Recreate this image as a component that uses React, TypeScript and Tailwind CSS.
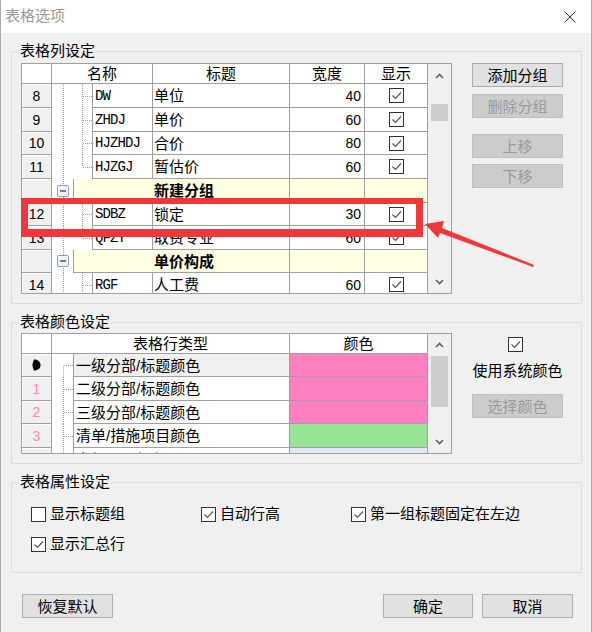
import React from "react";

const SANS = "font-['Liberation_Sans','Noto_Sans_CJK_SC',sans-serif]";
const MONO = "font-['Liberation_Mono','Noto_Sans_CJK_SC',monospace]";
const LINE = "border-[#a0a0a0]";

type Item = { kind: "item"; no: string; code: string; title: string; width: string; hc: string; h: number; last?: boolean };
type Group = { kind: "group"; title: string; hc: string; h: number };

const columnRows: (Item | Group)[] = [
  { kind: "item", no: "8", code: "DW", title: "单位", width: "40", hc: "h-[24px]", h: 24 },
  { kind: "item", no: "9", code: "ZHDJ", title: "单价", width: "60", hc: "h-[24px]", h: 24 },
  { kind: "item", no: "10", code: "HJZHDJ", title: "合价", width: "80", hc: "h-[23px]", h: 23 },
  { kind: "item", no: "11", code: "HJZGJ", title: "暂估价", width: "60", hc: "h-[24px]", h: 24, last: true },
  { kind: "group", title: "新建分组", hc: "h-[24px]", h: 24 },
  { kind: "item", no: "12", code: "SDBZ", title: "锁定", width: "30", hc: "h-[23px]", h: 23 },
  { kind: "item", no: "13", code: "QFZY", title: "取费专业", width: "60", hc: "h-[24px]", h: 24, last: true },
  { kind: "group", title: "单价构成", hc: "h-[23px]", h: 23 },
  { kind: "item", no: "14", code: "RGF", title: "人工费", width: "60", hc: "h-[24px]", h: 24 },
];

const colorRows = [
  { no: "", sel: true, text: "一级分部/标题颜色", color: "bg-[#ff80c0]", hc: "h-[23px]", h: 23 },
  { no: "1", sel: false, text: "二级分部/标题颜色", color: "bg-[#ff80c0]", hc: "h-[24px]", h: 24 },
  { no: "2", sel: false, text: "三级分部/标题颜色", color: "bg-[#ff80c0]", hc: "h-[23px]", h: 23 },
  { no: "3", sel: false, text: "清单/措施项目颜色", color: "bg-[#97e594]", hc: "h-[24px]", h: 24 },
  { no: "4", sel: false, text: "定额子目颜色", color: "bg-[#e4e4fa]", hc: "h-[24px]", h: 24 },
];

function Check({ on = true, className = "" }: { on?: boolean; className?: string }) {
  return (
    <span className={`flex h-[15px] w-[15px] shrink-0 items-center justify-center border border-[#333333] bg-white ${className}`}>
      {on && (
        <svg width="13" height="13" viewBox="0 0 13 13">
          <path d="M2.5 6.5 L5.5 9.5 L11 3.5" fill="none" stroke="#555555" strokeWidth="1.2" />
        </svg>
      )}
    </span>
  );
}

function Chevron({ up = false }: { up?: boolean }) {
  return (
    <svg width="9" height="6" viewBox="0 0 9 6">
      <path d={up ? "M1 5 L4.5 1.5 L8 5" : "M1 1 L4.5 4.5 L8 1"} fill="none" stroke="#606060" strokeWidth="1.6" />
    </svg>
  );
}

function Btn({ children, disabled = false, className = "" }: { children: React.ReactNode; disabled?: boolean; className?: string }) {
  return (
    <button
      type="button"
      className={`flex h-[24px] items-center justify-center border leading-none ${
        disabled ? "border-[#bfbfbf] bg-[#cccccc] text-[#9a9a9a]" : "border-[#adadad] bg-[#e1e1e1] text-black"
      } ${className}`}
    >
      {children}
    </button>
  );
}

function TreeItem({ h, last }: { h: number; last?: boolean }) {
  const m = Math.floor(h / 2) + 0.5;
  return (
    <svg width="40" height={h} className="block">
      <line x1="11.5" y1="0" x2="11.5" y2={h} stroke="#a0a0a0" strokeDasharray="1 1" />
      <line x1="30.5" y1="0" x2="30.5" y2={last ? m : h} stroke="#a0a0a0" strokeDasharray="1 1" />
      <line x1="31" y1={m} x2="40" y2={m} stroke="#a0a0a0" strokeDasharray="1 1" />
    </svg>
  );
}

function TreeGroup({ h }: { h: number }) {
  const m = Math.floor(h / 2);
  return (
    <svg width="21" height={h} className="block">
      <line x1="11.5" y1="0" x2="11.5" y2={h} stroke="#a0a0a0" strokeDasharray="1 1" />
      <rect x="5.5" y={m - 5.5} width="11" height="11" rx="1" fill="#eef1f5" stroke="#8c9cb2" />
      <line x1="8" y1={m} x2="14" y2={m} stroke="#44587c" strokeWidth="1.5" />
    </svg>
  );
}

function TreeColor({ h, first }: { h: number; first?: boolean }) {
  const m = Math.floor(h / 2) + 0.5;
  return (
    <svg width="21" height={h} className="block">
      <line x1="11.5" y1={first ? m : 0} x2="11.5" y2={h} stroke="#a0a0a0" strokeDasharray="1 1" />
      <line x1="12" y1={m} x2="21" y2={m} stroke="#a0a0a0" strokeDasharray="1 1" />
    </svg>
  );
}

function ColumnTable() {
  return (
    <div className={`flex h-[231px] w-[431px] shrink-0 border ${LINE} bg-white`}>
      <div className="flex w-[406px] flex-col overflow-hidden leading-none">
        {/* header */}
        <div className={`flex h-[20px] shrink-0 border-b ${LINE}`}>
          <div className={`w-[30px] border-r ${LINE}`} />
          <div className={`flex w-[101px] items-center justify-center border-r ${LINE}`}>名称</div>
          <div className={`flex w-[137px] items-center justify-center border-r ${LINE}`}>标题</div>
          <div className={`flex w-[75px] items-center justify-center border-r ${LINE}`}>宽度</div>
          <div className={`flex w-[63px] items-center justify-center border-r ${LINE}`}>显示</div>
        </div>
        {columnRows.map((r, i) =>
          r.kind === "item" ? (
            <div key={i} className={`flex shrink-0 ${r.hc}`}>
              <div className={`flex w-[30px] items-center justify-center border-r border-b ${LINE} bg-[#f0f0f0] text-[14px] shadow-[inset_1px_1px_0_#ffffff]`}>
                {r.no}
              </div>
              <div className="w-[40px]">
                <TreeItem h={r.h} last={r.last} />
              </div>
              <div className={`flex w-[61px] items-center border-x border-b ${LINE} pl-[2px] text-[14px] tracking-[-0.9px] ${MONO}`}>
                {r.code}
              </div>
              <div className={`flex w-[137px] items-center border-r border-b ${LINE} pl-[1px]`}>{r.title}</div>
              <div className={`flex w-[75px] items-center justify-end border-r border-b ${LINE} pr-[3px] text-[14px]`}>{r.width}</div>
              <div className={`flex w-[63px] items-center justify-center border-r border-b ${LINE}`}>
                <Check />
              </div>
            </div>
          ) : (
            <div key={i} className={`flex shrink-0 ${r.hc}`}>
              <div className={`w-[30px] border-r border-b ${LINE} bg-[#f0f0f0] shadow-[inset_1px_1px_0_#ffffff]`} />
              <div className="w-[21px]">
                <TreeGroup h={r.h} />
              </div>
              <div className={`flex w-[355px] border-l border-b ${LINE} bg-[#ffffe1]`}>
                <div className="w-[79px]" />
                <div className={`flex w-[137px] items-center border-r ${LINE} pl-[1px] font-bold`}>{r.title}</div>
                <div className={`w-[75px] border-r ${LINE}`} />
                <div className={`w-[63px] border-r ${LINE}`} />
              </div>
            </div>
          )
        )}
      </div>
      <div className="flex w-[23px] flex-col bg-[#f0f0f0]">
        <div className="flex h-[23px] items-center justify-center">
          <Chevron up />
        </div>
        <div className="mx-[3px] mt-[17px] h-[17px] bg-[#cdcdcd]" />
        <div className="flex-1" />
        <div className="flex h-[23px] items-center justify-center">
          <Chevron />
        </div>
      </div>
    </div>
  );
}

function ColorTable() {
  return (
    <div className={`flex h-[121px] w-[431px] shrink-0 border ${LINE} bg-white`}>
      <div className="flex w-[406px] flex-col overflow-hidden leading-none">
        <div className={`flex h-[20px] shrink-0 border-b ${LINE}`}>
          <div className={`w-[30px] border-r ${LINE}`} />
          <div className={`flex w-[238px] items-center justify-center border-r ${LINE}`}>表格行类型</div>
          <div className={`flex w-[138px] items-center justify-center border-r ${LINE}`}>颜色</div>
        </div>
        {colorRows.map((r, i) => (
          <div key={i} className={`flex shrink-0 ${r.hc}`}>
            <div className={`flex w-[30px] items-center justify-center border-r border-b ${LINE} bg-[#f0f0f0] text-[14px] text-[#ff80c0] shadow-[inset_1px_1px_0_#ffffff]`}>
              {r.sel ? (
                <svg width="9" height="12" viewBox="0 0 9 12">
                  <path d="M2 0.5 C6.5 0.5 8.5 3 8.5 6 C8.5 9 6.5 11.5 2 11.5 C1 9 0.5 7.5 0.5 6 C0.5 4.5 1 3 2 0.5 Z" fill="#000000" />
                </svg>
              ) : (
                r.no
              )}
            </div>
            <div className="w-[21px]">
              <TreeColor h={r.h} first={i === 0} />
            </div>
            <div className={`flex w-[217px] items-center border-x border-b ${LINE} pl-[2px] ${r.sel ? "bg-[#f0f0f0]" : "bg-white"}`}>
              {r.text}
            </div>
            <div className={`w-[138px] border-r border-b ${LINE} ${r.color}`} />
          </div>
        ))}
      </div>
      <div className="flex w-[23px] flex-col bg-[#f0f0f0]">
        <div className="flex h-[22px] items-center justify-center">
          <Chevron up />
        </div>
        <div className="mx-[3px] h-[51px] bg-[#cdcdcd]" />
        <div className="flex-1" />
        <div className="flex h-[22px] items-center justify-center">
          <Chevron />
        </div>
      </div>
    </div>
  );
}

export default function App() {
  return (
    <div className={`relative flex h-[632px] w-[592px] flex-col overflow-hidden border-x border-[#aaaaaa] bg-[#f0f0f0] text-[15px] text-black ${SANS}`}>
      {/* Title bar */}
      <div className="flex h-[33px] shrink-0 items-center justify-between bg-white pl-[4px] pr-[15px]">
        <span className="text-[#999999]">表格选项</span>
        <svg width="12" height="12" viewBox="0 0 12 12">
          <path d="M0.5 0.5 L11.5 11.5 M11.5 0.5 L0.5 11.5" stroke="#333333" strokeWidth="1" />
        </svg>
      </div>

      <div className="flex flex-col pl-[10px] pr-[9px] pt-[8px]">
        {/* 表格列设定 */}
        <fieldset className="border border-[#dcdcdc] pb-[9px] pl-[9px] pt-[2px]">
          <legend className="ml-[-2px] px-[1px] leading-[20px]">表格列设定</legend>
          <div className="flex items-start">
            <ColumnTable />
            <div className="ml-[20px] flex w-[91px] flex-col">
              <Btn>添加分组</Btn>
              <Btn disabled className="mt-[7px]">删除分组</Btn>
              <Btn disabled className="mt-[16px]">上移</Btn>
              <Btn disabled className="mt-[6px]">下移</Btn>
            </div>
          </div>
        </fieldset>

        {/* 表格颜色设定 */}
        <fieldset className="mt-[8px] border border-[#dcdcdc] pb-[9px] pl-[9px] pt-[1px]">
          <legend className="ml-[-2px] px-[1px] leading-[20px]">表格颜色设定</legend>
          <div className="flex items-start">
            <ColorTable />
            <div className="ml-[20px] flex w-[91px] flex-col items-center pt-[4px]">
              <Check className="mr-[5px]" />
              <span className="mt-[9px] leading-[20px]">使用系统颜色</span>
              <Btn disabled className="mt-[13px] w-[91px]">选择颜色</Btn>
            </div>
          </div>
        </fieldset>

        {/* 表格属性设定 */}
        <fieldset className="mt-[8px] border border-[#dcdcdc] pb-[18px] pl-[9px] pt-[12px]">
          <legend className="ml-[-2px] px-[1px] leading-[20px]">表格属性设定</legend>
          <div className="grid grid-cols-[170px_150px_1fr] gap-y-[10px] pl-[10px]">
            <label className="flex h-[20px] items-center gap-[4px]">
              <Check on={false} />
              <span>显示标题组</span>
            </label>
            <label className="flex h-[20px] items-center gap-[4px]">
              <Check />
              <span>自动行高</span>
            </label>
            <label className="flex h-[20px] items-center gap-[4px]">
              <Check />
              <span>第一组标题固定在左边</span>
            </label>
            <label className="flex h-[20px] items-center gap-[4px]">
              <Check />
              <span>显示汇总行</span>
            </label>
          </div>
        </fieldset>

        {/* Footer buttons */}
        <div className="mt-[21px] flex items-center">
          <Btn className="ml-[11px] w-[91px]">恢复默认</Btn>
          <div className="flex-1" />
          <Btn className="w-[90px]">确定</Btn>
          <Btn className="ml-[9px] mr-[9px] w-[91px]">取消</Btn>
        </div>
      </div>

      {/* annotation: red highlight and arrow */}
      <div className="pointer-events-none absolute left-[20px] top-[198px] h-[39px] w-[402px] border-[7px] border-t-[6px] border-b-[8px] border-[#f0383a]" />
      <svg className="pointer-events-none absolute left-0 top-0" width="592" height="632" viewBox="0 0 592 632">
        <polygon points="424,224 443,221 441,228 533,265 532,267 439,233 437,238" fill="#f0383a" />
      </svg>
    </div>
  );
}
